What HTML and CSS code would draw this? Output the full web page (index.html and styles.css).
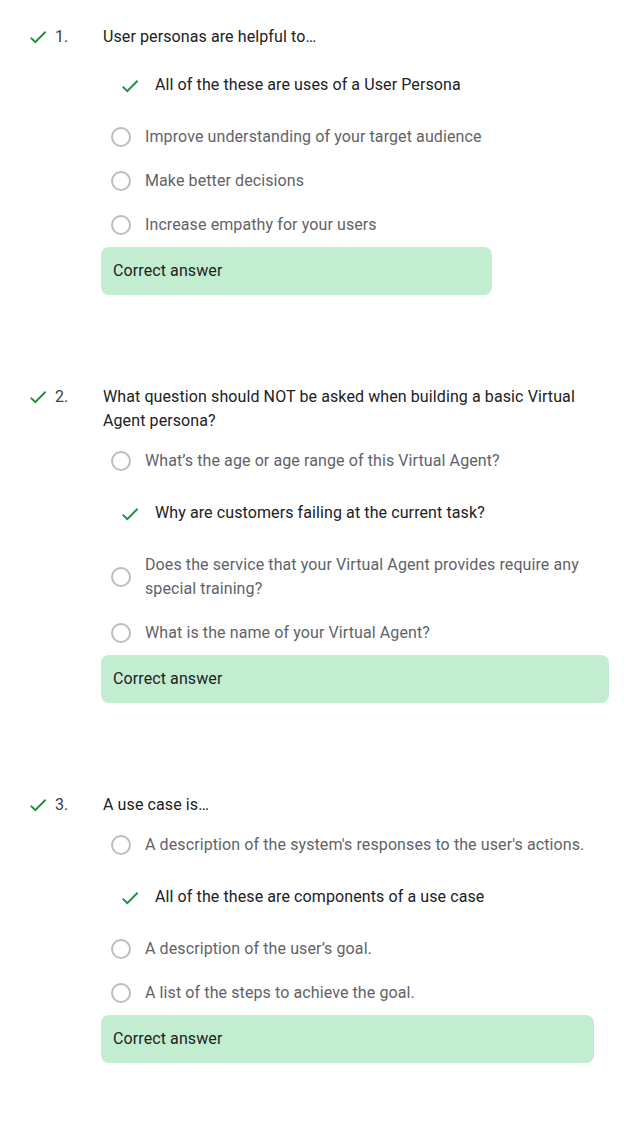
FILE: index.html
```html
<!DOCTYPE html>
<html lang="en">
<head>
<meta charset="utf-8">
<title>Quiz results</title>
<link rel="stylesheet" href="styles.css">
</head>
<body>
<main class="quiz">
  <section class="q">
    <div class="q-head">
      <svg class="q-check" viewBox="0 0 24 24" width="22" height="22"><path d="M9 16.17L4.83 12l-1.42 1.41L9 19 21 7l-1.41-1.41z"/></svg>
      <span class="q-num">1.</span>
      <p class="q-text">User personas are helpful to…</p>
    </div>
    <div class="answers">
      <div class="opt opt-correct"><svg class="a-check" viewBox="0 0 24 24" width="22" height="22"><path d="M9 16.17L4.83 12l-1.42 1.41L9 19 21 7l-1.41-1.41z"/></svg><span>All of the these are uses of a User Persona</span></div>
      <div class="opt"><span class="radio"></span><span>Improve understanding of your target audience</span></div>
      <div class="opt"><span class="radio"></span><span>Make better decisions</span></div>
      <div class="opt"><span class="radio"></span><span>Increase empathy for your users</span></div>
      <div class="result">Correct answer</div>
    </div>
  </section>

  <section class="q">
    <div class="q-head">
      <svg class="q-check" viewBox="0 0 24 24" width="22" height="22"><path d="M9 16.17L4.83 12l-1.42 1.41L9 19 21 7l-1.41-1.41z"/></svg>
      <span class="q-num">2.</span>
      <p class="q-text">What question should NOT be asked when building a basic Virtual Agent persona?</p>
    </div>
    <div class="answers">
      <div class="opt"><span class="radio"></span><span>What’s the age or age range of this Virtual Agent?</span></div>
      <div class="opt opt-correct"><svg class="a-check" viewBox="0 0 24 24" width="22" height="22"><path d="M9 16.17L4.83 12l-1.42 1.41L9 19 21 7l-1.41-1.41z"/></svg><span>Why are customers failing at the current task?</span></div>
      <div class="opt"><span class="radio"></span><span>Does the service that your Virtual Agent provides require any special training?</span></div>
      <div class="opt"><span class="radio"></span><span>What is the name of your Virtual Agent?</span></div>
      <div class="result">Correct answer</div>
    </div>
  </section>

  <section class="q">
    <div class="q-head">
      <svg class="q-check" viewBox="0 0 24 24" width="22" height="22"><path d="M9 16.17L4.83 12l-1.42 1.41L9 19 21 7l-1.41-1.41z"/></svg>
      <span class="q-num">3.</span>
      <p class="q-text">A use case is…</p>
    </div>
    <div class="answers">
      <div class="opt"><span class="radio"></span><span>A description of the system's responses to the user's actions.</span></div>
      <div class="opt opt-correct"><svg class="a-check" viewBox="0 0 24 24" width="22" height="22"><path d="M9 16.17L4.83 12l-1.42 1.41L9 19 21 7l-1.41-1.41z"/></svg><span>All of the these are components of a use case</span></div>
      <div class="opt"><span class="radio"></span><span>A description of the user’s goal.</span></div>
      <div class="opt"><span class="radio"></span><span>A list of the steps to achieve the goal.</span></div>
      <div class="result">Correct answer</div>
    </div>
  </section>
</main>
</body>
</html>
```

FILE: styles.css
```css
* { box-sizing: border-box; }

html, body {
  margin: 0;
  padding: 0;
  background: #ffffff;
}

body {
  font-family: Roboto, "Noto Sans", "Liberation Sans", sans-serif;
  font-size: 16px;
  line-height: 24px;
  letter-spacing: 0.1px;
  color: #202124;
}

.quiz {
  width: 643px;
  padding: 25px 0 40px 0;
  display: flex;
  flex-direction: column;
  gap: 90px;
}

.q-head {
  display: flex;
  align-items: flex-start;
  padding-left: 27px;
  margin-right: 34px;
}

.q-check,
.a-check {
  flex: none;
  fill: #1e8e3e;
  margin-top: 1px;
}

.q-num {
  flex: none;
  width: 48px;
  margin-left: 6px;
  color: #3c4043;
}

.q-text {
  margin: 0;
  color: #202124;
}

.answers {
  margin: 6px 34px 0 101px;
  width: fit-content;
  display: flex;
  flex-direction: column;
}

.opt {
  display: flex;
  align-items: center;
  gap: 14px;
  padding: 10px;
  color: #5f6368;
}

.opt-correct {
  padding: 18px 10px 18px 18px;
  color: #202124;
}

.radio {
  flex: none;
  width: 20px;
  height: 20px;
  border: 2px solid #bdbdbd;
  border-radius: 50%;
}

.result {
  padding: 12px;
  background: #c3edd0;
  border-radius: 8px;
  color: #202124;
}
```
